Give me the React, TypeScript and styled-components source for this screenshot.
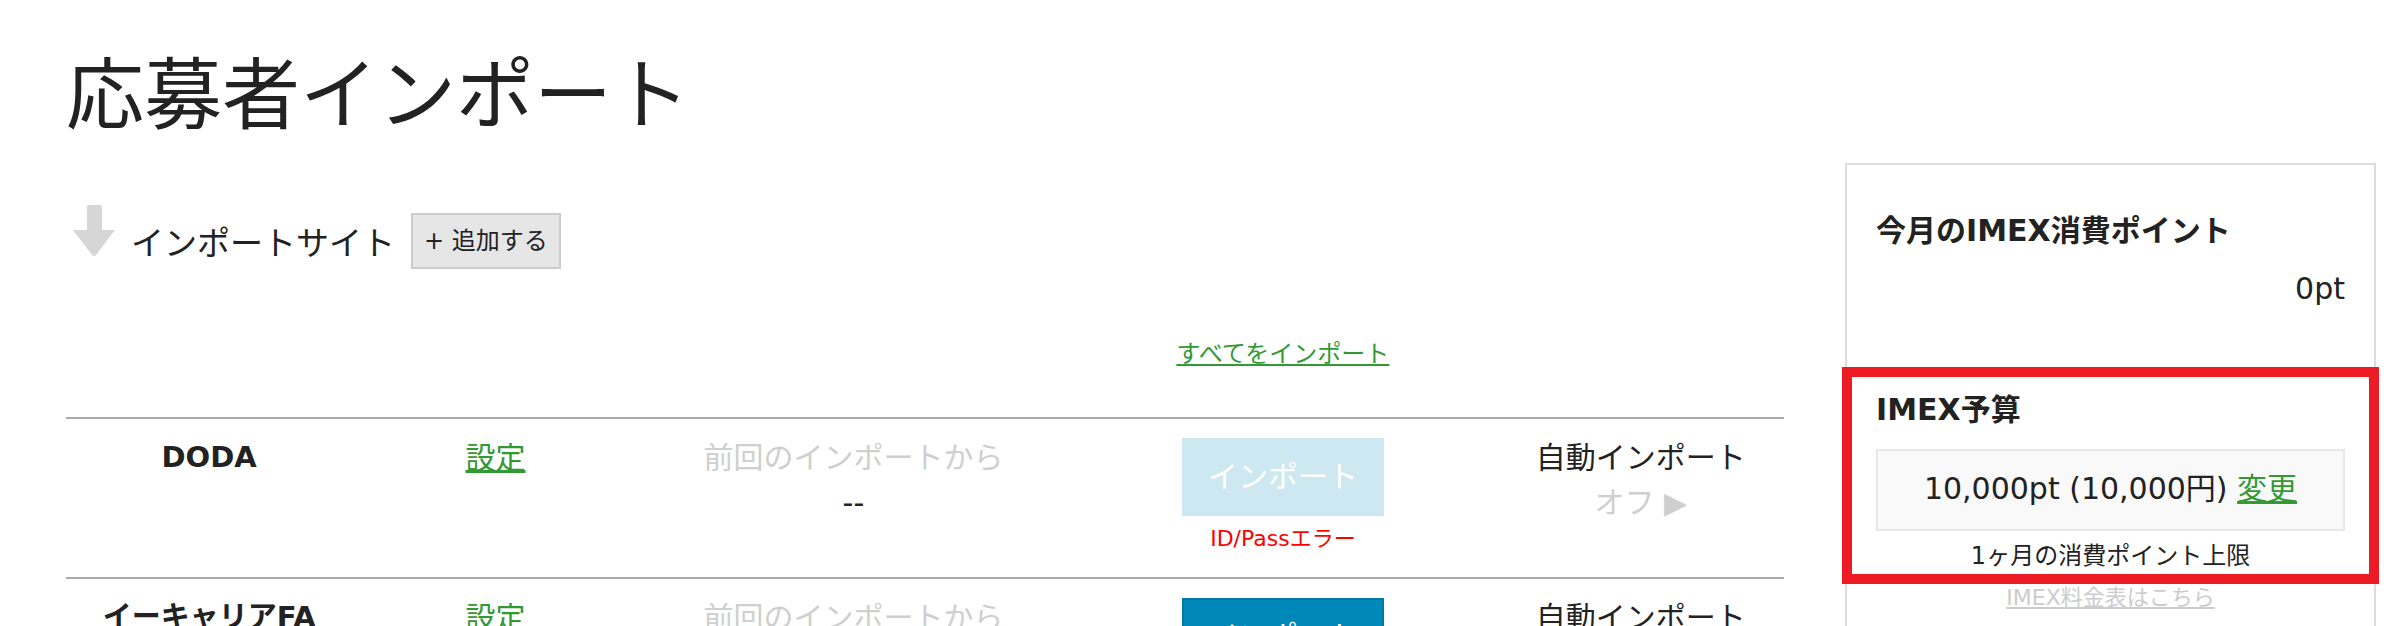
import styled, { createGlobalStyle } from 'styled-components';

const GlobalStyle = createGlobalStyle`
  html, body {
    margin: 0;
    padding: 0;
    background: #fff;
    overflow: hidden;
  }
  body {
    font-family: 'DejaVu Sans', 'Noto Sans CJK JP', sans-serif;
    color: #222;
  }
`;

type Site = {
  name: string;
  error?: string;
  disabled: boolean;
};

const sites: Site[] = [
  { name: 'DODA', error: 'ID/Passエラー', disabled: true },
  { name: 'イーキャリアFA', disabled: false },
];

function DownArrow() {
  return (
    <ArrowIcon width="42" height="51" viewBox="0 0 42 51" aria-hidden>
      <rect x="14" y="0" width="15" height="28" rx="2" fill="#d6d6d6" />
      <path d="M0 25 H42 L22.5 50.5 Q21 52 19.5 50.5 Z" fill="#d6d6d6" />
    </ArrowIcon>
  );
}

export default function App() {
  return (
    <>
      <GlobalStyle />
      <Page>
        <Main>
          <Title>応募者インポート</Title>

          <SiteHeader>
            <DownArrow />
            <SiteLabel>インポートサイト</SiteLabel>
            <AddButton type="button">+ 追加する</AddButton>
          </SiteHeader>

          <AllImportRow>
            <AllImportLink href="#">すべてをインポート</AllImportLink>
          </AllImportRow>

          {sites.map((site) => (
            <SiteRow key={site.name}>
              <NameCell>{site.name}</NameCell>
              <Cell>
                <GreenLink href="#">設定</GreenLink>
              </Cell>
              <Cell>
                <Muted>前回のインポートから</Muted>
                <div>--</div>
              </Cell>
              <Cell>
                <ImportButton type="button" $disabled={site.disabled}>
                  インポート
                </ImportButton>
                {site.error && <ErrorText>{site.error}</ErrorText>}
              </Cell>
              <Cell>
                <div>自動インポート</div>
                <Muted>オフ ▶</Muted>
              </Cell>
            </SiteRow>
          ))}
        </Main>

        <Side>
          <PointSection>
            <SideTitle>今月のIMEX消費ポイント</SideTitle>
            <PointValue>0pt</PointValue>
          </PointSection>
          <BudgetSection>
            <SideTitle>IMEX予算</SideTitle>
            <BudgetBox>
              10,000pt (10,000円) <GreenLink href="#">変更</GreenLink>
            </BudgetBox>
            <Note>1ヶ月の消費ポイント上限</Note>
          </BudgetSection>
          <PriceLink href="#">IMEX料金表はこちら</PriceLink>
        </Side>
      </Page>
    </>
  );
}

const Page = styled.div`
  display: flex;
  align-items: flex-start;
  gap: 61px;
  padding-left: 66px;
`;

const Main = styled.main`
  flex: none;
  width: 1718px;
`;

const Title = styled.h1`
  margin: 50px 0 0;
  font-family: 'Noto Sans CJK JP', sans-serif;
  font-size: 78px;
  line-height: 78px;
  font-weight: 400;
  color: #222;
`;

const SiteHeader = styled.div`
  display: flex;
  align-items: flex-start;
  margin-top: 77px;
`;

const ArrowIcon = styled.svg`
  flex: none;
  margin: 0 16px 0 7px;
`;

const SiteLabel = styled.h2`
  margin: 22px 16px 0 0;
  font-size: 33px;
  line-height: 33px;
  font-weight: 400;
`;

const AddButton = styled.button`
  margin-top: 8px;
  padding: 8px 11px;
  border: 2px solid #ccc;
  border-radius: 0;
  background: #e6e6e6;
  color: #222;
  font-family: inherit;
  font-size: 24px;
  line-height: 36px;
`;

const columns = '1fr 1fr 1.5fr 1.5fr 1fr';

const AllImportRow = styled.div`
  display: grid;
  grid-template-columns: ${columns};
  box-sizing: border-box;
  height: 148px;
  padding-top: 67px;
`;

const GreenLink = styled.a`
  color: #339933;
  text-decoration: underline;
`;

const AllImportLink = styled(GreenLink)`
  grid-column: 4;
  justify-self: center;
  align-self: start;
  font-size: 24px;
  line-height: 36px;
`;

const SiteRow = styled.div`
  display: grid;
  grid-template-columns: ${columns};
  align-items: start;
  box-sizing: border-box;
  height: 160px;
  padding-top: 16px;
  border-top: 2px solid #aaa;
`;

const Cell = styled.div`
  text-align: center;
  font-size: 30px;
  line-height: 45px;
`;

const NameCell = styled(Cell)`
  font-size: 29px;
  font-weight: 700;
`;

const Muted = styled.div`
  color: #cfcfcf;
`;

const ImportButton = styled.button<{ $disabled: boolean }>`
  display: block;
  box-sizing: border-box;
  width: 202px;
  height: 78px;
  margin: 3px auto 0;
  border: 2px solid ${(p) => (p.$disabled ? '#cde8f0' : '#0078a6')};
  border-radius: 0;
  background: ${(p) => (p.$disabled ? '#cde8f0' : '#0088b8')};
  color: #fff;
  font-family: inherit;
  font-size: 30px;
  line-height: 70px;
`;

const ErrorText = styled.div`
  margin-top: 6px;
  color: #ff0000;
  font-size: 22px;
  line-height: 33px;
`;

const Side = styled.aside`
  flex: none;
  box-sizing: border-box;
  width: 531px;
  margin-top: 163px;
  padding-bottom: 120px;
  border: 2px solid #ddd;
`;

const PointSection = styled.section`
  padding: 43px 29px 66px;
`;

const BudgetSection = styled.section`
  position: relative;
  padding: 10px 29px 0;

  &::after {
    content: '';
    position: absolute;
    top: -10px;
    bottom: -10px;
    left: -5px;
    right: -5px;
    border: 10px solid #ed1c24;
    pointer-events: none;
  }
`;

const SideTitle = styled.h3`
  margin: 0;
  font-size: 30px;
  line-height: 45px;
  font-weight: 700;
`;

const PointValue = styled.div`
  margin-top: 13px;
  text-align: right;
  font-size: 30px;
  line-height: 45px;
`;

const BudgetBox = styled.div`
  margin-top: 17px;
  padding: 15px 0 18px;
  border: 2px solid #e8e8e8;
  background: #f9f9f9;
  text-align: center;
  font-size: 30px;
  line-height: 45px;
`;

const Note = styled.p`
  margin: 8px 0 0;
  text-align: center;
  font-size: 24px;
  line-height: 35px;
`;

const PriceLink = styled.a`
  display: block;
  margin-top: 7px;
  text-align: center;
  color: #ccc;
  font-size: 22px;
  line-height: 33px;
  text-decoration: underline;
`;
